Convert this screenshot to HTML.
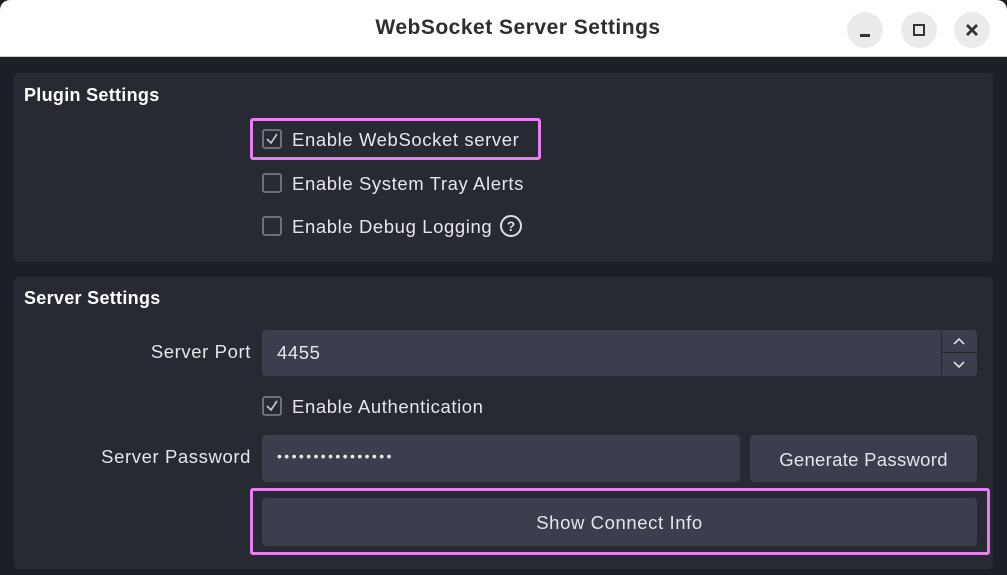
<!DOCTYPE html>
<html><head><meta charset="utf-8"><style>
*{margin:0;padding:0;box-sizing:border-box}
body{width:1007px;height:575px;overflow:hidden;background:#1d1f26;font-family:"Liberation Sans","DejaVu Sans",sans-serif;color:#e4e4e8;position:relative}
.a{position:absolute}
.title{left:0;top:0;width:1007px;height:57px;background:#fff;border-radius:10px 10px 0 0;border-bottom:1px solid #ccc}
.title span{position:absolute;left:0;width:1036px;top:16px;text-align:center;font-weight:bold;font-size:21px;letter-spacing:0.5px;color:#2e2e2e}
.wb{width:36px;height:36px;border-radius:50%;background:#ebebeb;top:12px}
.panel{background:#272a33;border-radius:4px;left:14px;width:979px}
.h{font-weight:bold;font-size:18px;color:#fff;letter-spacing:0.3px}
.t{font-size:18.5px;color:#e6e6ea;letter-spacing:0.6px;white-space:nowrap}
.r{text-align:right;width:240px;left:11px}
.cb{width:20px;height:20px;border:2px solid #6d6f78;border-radius:3px}
.inp{background:#3b3e4c;border-radius:4px}
.pink{border:3px solid #e87ff0;border-radius:3px}
</style></head><body>
<div class="a title"><span>WebSocket Server Settings</span></div>
<div class="a wb" style="left:847px"><div class="a" style="left:13px;top:22px;width:10px;height:3px;background:#333"></div></div>
<div class="a wb" style="left:901px"><div class="a" style="left:12px;top:12px;width:12px;height:12px;border:2.5px solid #333"></div></div>
<div class="a wb" style="left:954px"><svg class="a" style="left:11px;top:11px" width="14" height="14"><path d="M2 2L12 12M12 2L2 12" stroke="#333" stroke-width="2.8"/></svg></div>

<div class="a panel" style="top:73px;height:189px"></div>
<div class="a h" style="left:24px;top:85px">Plugin Settings</div>
<div class="a pink" style="left:250px;top:118px;width:291px;height:42px"></div>
<div class="a cb" style="left:262px;top:129px"><svg class="a" style="left:1px;top:1px" width="14" height="14"><path d="M2 7L6 11L12 2" stroke="#ccc" stroke-width="1.6" fill="none"/></svg></div>
<div class="a t" style="left:292px;top:129px">Enable WebSocket server</div>
<div class="a cb" style="left:262px;top:173px"></div>
<div class="a t" style="left:292px;top:173px">Enable System Tray Alerts</div>
<div class="a cb" style="left:262px;top:216px"></div>
<div class="a t" style="left:292px;top:216px">Enable Debug Logging</div>
<div class="a" style="left:500px;top:215px;width:22px;height:22px;border:2px solid #ddd;border-radius:50%;font-size:14px;font-weight:bold;text-align:center;line-height:18px;color:#ddd">?</div>

<div class="a panel" style="top:277px;height:292px"></div>
<div class="a h" style="left:24px;top:288px">Server Settings</div>
<div class="a t r" style="top:341px">Server Port</div>
<div class="a inp" style="left:262px;top:330px;width:715px;height:46px"></div>
<div class="a" style="left:941px;top:331px;width:1px;height:44px;background:#25272f"></div>
<div class="a" style="left:942px;top:352px;width:35px;height:1px;background:#25272f"></div>
<svg class="a" style="left:952px;top:336px" width="14" height="34"><path d="M2 8L7 3L12 8M2 26L7 31L12 26" stroke="#ddd" stroke-width="1.6" fill="none"/></svg>
<div class="a t" style="left:277px;top:342px">4455</div>
<div class="a cb" style="left:262px;top:396px"><svg class="a" style="left:1px;top:1px" width="14" height="14"><path d="M2 7L6 11L12 2" stroke="#ccc" stroke-width="1.6" fill="none"/></svg></div>
<div class="a t" style="left:292px;top:396px">Enable Authentication</div>
<div class="a t r" style="top:446px">Server Password</div>
<div class="a inp" style="left:262px;top:435px;width:478px;height:47px"></div>
<div class="a" style="left:277px;top:448px;font-size:14px;letter-spacing:2.4px;color:#eee">••••••••••••••••</div>
<div class="a inp" style="left:750px;top:435px;width:227px;height:47px"></div>
<div class="a t" style="left:750px;top:449px;width:227px;text-align:center;letter-spacing:0.3px">Generate Password</div>
<div class="a pink" style="left:250px;top:488px;width:740px;height:67px"></div>
<div class="a inp" style="left:262px;top:498px;width:715px;height:48px"></div>
<div class="a t" style="left:262px;top:512px;width:715px;text-align:center">Show Connect Info</div>
</body></html>
